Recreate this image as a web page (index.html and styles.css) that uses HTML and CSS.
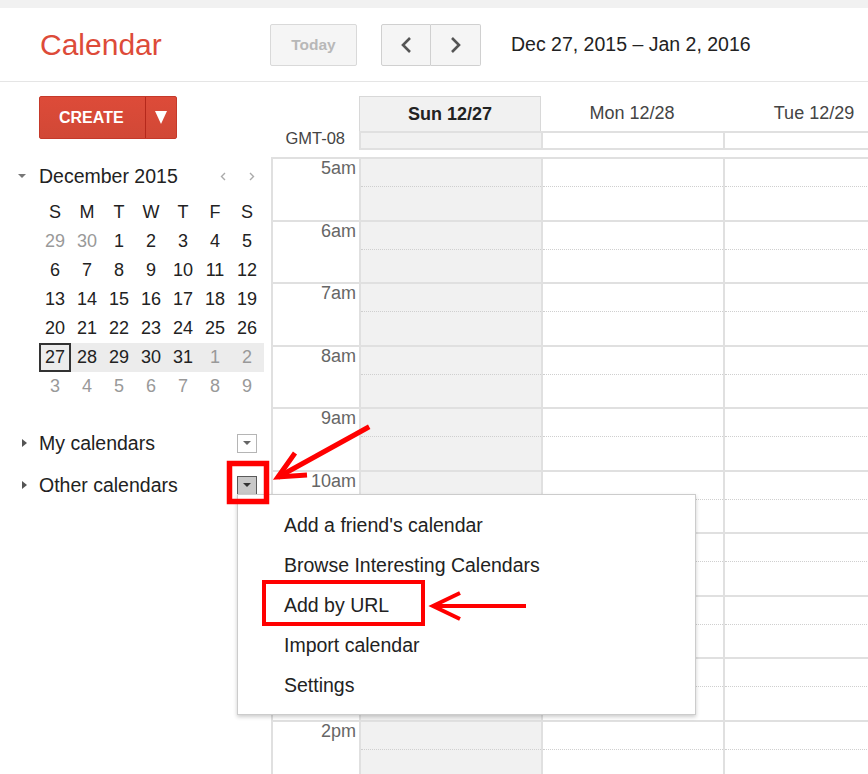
FILE: index.html
```html
<!DOCTYPE html>
<html lang="en">
<head>
  <meta charset="UTF-8">
  <meta name="viewport" content="width=device-width, initial-scale=1.0">
  <title>Calendar</title>
  <link rel="stylesheet" href="styles.css">
</head>
<body>
<div class="app">
  <div class="top-strip"></div>

  <!-- Header -->
  <header class="header">
    <div class="logo">Calendar</div>
    <button class="btn btn-today">Today</button>
    <div class="btn-group">
      <button class="btn btn-nav">
        <svg width="12" height="18" viewBox="0 0 12 18"><polyline points="10,2 3,9 10,16" fill="none" stroke="#555" stroke-width="2.6"/></svg>
      </button>
      <button class="btn btn-nav">
        <svg width="12" height="18" viewBox="0 0 12 18"><polyline points="2,2 9,9 2,16" fill="none" stroke="#555" stroke-width="2.6"/></svg>
      </button>
    </div>
    <div class="date-range">Dec 27, 2015 &ndash; Jan 2, 2016</div>
  </header>

  <div class="main">
    <!-- Sidebar -->
    <aside class="sidebar">
      <div class="create">
        <span class="create-label">CREATE</span>
        <span class="create-arrow">
          <svg width="12" height="13" viewBox="0 0 12 13"><polygon points="0,0 12,0 6,13" fill="#fff"/></svg>
        </span>
      </div>

      <div class="mini-head">
        <span class="toggle toggle-down"></span>
        <span class="mini-title">December 2015</span>
        <span class="mini-nav mini-prev">
          <svg width="6" height="9" viewBox="0 0 6 9"><polyline points="5,1 1.5,4.5 5,8" fill="none" stroke="#aaa" stroke-width="1.4"/></svg>
        </span>
        <span class="mini-nav">
          <svg width="6" height="9" viewBox="0 0 6 9"><polyline points="1,1 4.5,4.5 1,8" fill="none" stroke="#aaa" stroke-width="1.4"/></svg>
        </span>
      </div>

      <div class="mini-grid">
        <div class="mini-row"><span>S</span><span>M</span><span>T</span><span>W</span><span>T</span><span>F</span><span>S</span></div>
        <div class="mini-row"><span class="off">29</span><span class="off">30</span><span>1</span><span>2</span><span>3</span><span>4</span><span>5</span></div>
        <div class="mini-row"><span>6</span><span>7</span><span>8</span><span>9</span><span>10</span><span>11</span><span>12</span></div>
        <div class="mini-row"><span>13</span><span>14</span><span>15</span><span>16</span><span>17</span><span>18</span><span>19</span></div>
        <div class="mini-row"><span>20</span><span>21</span><span>22</span><span>23</span><span>24</span><span>25</span><span>26</span></div>
        <div class="mini-row current"><span class="today">27</span><span>28</span><span>29</span><span>30</span><span>31</span><span class="off">1</span><span class="off">2</span></div>
        <div class="mini-row"><span class="off">3</span><span class="off">4</span><span class="off">5</span><span class="off">6</span><span class="off">7</span><span class="off">8</span><span class="off">9</span></div>
      </div>

      <div class="cal-list">
        <div class="cal-row">
          <span class="toggle toggle-right"></span>
          <span class="cal-name">My calendars</span>
          <span class="dd-btn"></span>
        </div>
        <div class="cal-row">
          <span class="toggle toggle-right"></span>
          <span class="cal-name">Other calendars</span>
          <span class="dd-btn active"></span>
        </div>
      </div>
    </aside>

    <!-- Week view -->
    <section class="week">
      <div class="week-head">
        <div></div>
        <div class="head-day sel">Sun 12/27</div>
        <div class="head-day">Mon 12/28</div>
        <div class="head-day">Tue 12/29</div>
      </div>
      <div class="allday">
        <div class="tz">GMT-08</div>
        <div class="allday-cell sel"></div>
        <div class="allday-cell"></div>
        <div class="allday-cell"></div>
      </div>
      <div class="hours">
        <div class="hour"><div class="time">5am</div><div class="slot sel"></div><div class="slot"></div><div class="slot"></div></div>
        <div class="hour"><div class="time">6am</div><div class="slot sel"></div><div class="slot"></div><div class="slot"></div></div>
        <div class="hour"><div class="time">7am</div><div class="slot sel"></div><div class="slot"></div><div class="slot"></div></div>
        <div class="hour"><div class="time">8am</div><div class="slot sel"></div><div class="slot"></div><div class="slot"></div></div>
        <div class="hour"><div class="time">9am</div><div class="slot sel"></div><div class="slot"></div><div class="slot"></div></div>
        <div class="hour"><div class="time">10am</div><div class="slot sel"></div><div class="slot"></div><div class="slot"></div></div>
        <div class="hour"><div class="time">11am</div><div class="slot sel"></div><div class="slot"></div><div class="slot"></div></div>
        <div class="hour"><div class="time">12pm</div><div class="slot sel"></div><div class="slot"></div><div class="slot"></div></div>
        <div class="hour"><div class="time">1pm</div><div class="slot sel"></div><div class="slot"></div><div class="slot"></div></div>
        <div class="hour"><div class="time">2pm</div><div class="slot sel"></div><div class="slot"></div><div class="slot"></div></div>
      </div>
    </section>

    <!-- Other calendars menu -->
    <div class="menu">
      <div class="menu-item">Add a friend's calendar</div>
      <div class="menu-item">Browse Interesting Calendars</div>
      <div class="menu-item">Add by URL</div>
      <div class="menu-item">Import calendar</div>
      <div class="menu-item">Settings</div>
    </div>
  </div>

  <!-- Annotation marks -->
  <svg class="marks" width="868" height="774" viewBox="0 0 868 774">
    <g fill="none" stroke="#f00" stroke-linecap="square">
      <rect x="229.5" y="463.5" width="37" height="38" stroke-width="5.5"/>
      <rect x="264" y="582" width="159" height="42" stroke-width="4"/>
      <line x1="367" y1="428" x2="280" y2="476" stroke-width="5"/>
      <polyline points="295,453 278,477 307,475" stroke-width="5" stroke-linecap="butt"/>
      <line x1="524" y1="606" x2="436" y2="606" stroke-width="4"/>
      <polyline points="460,593 433,606 460,619" stroke-width="4" stroke-linecap="butt"/>
    </g>
  </svg>
</div>
</body>
</html>
```

FILE: styles.css
```css
/* Global body styles */
body {
  margin: 0;
  font-family: "Liberation Sans", Arial, sans-serif;
  color: #222;
  background: #fff;
  overflow: hidden;
}

.app {
  position: relative;
  width: 868px;
  height: 774px;
  overflow: hidden;
}

.top-strip {
  height: 8px;
  background: #f1f1f1;
}

/* Header */
.header {
  display: flex;
  align-items: center;
  height: 73px;
  padding-left: 40px;
  border-bottom: 1px solid #e5e5e5;
}

.logo {
  width: 230px;
  font-size: 30px;
  color: #dd4b39;
}

.btn {
  font-family: inherit;
  background: #f5f5f5;
  border: 1px solid #d9d9d9;
  border-radius: 2px;
  padding: 0;
  height: 42px;
}

.btn-today {
  width: 87px;
  font-size: 15.5px;
  font-weight: bold;
  color: #b8b8b8;
}

.btn-group {
  display: flex;
  margin-left: 24px;
}

.btn-nav {
  width: 50px;
  display: flex;
  align-items: center;
  justify-content: center;
  border-color: #d0d0d0;
}

.btn-nav:first-child {
  border-radius: 2px 0 0 2px;
}

.btn-nav:last-child {
  border-left: none;
  border-radius: 0 2px 2px 0;
}

.date-range {
  margin-left: 30px;
  font-size: 19.5px;
}

/* Main area */
.main {
  position: relative;
  display: flex;
}

.sidebar {
  width: 271px;
  flex-shrink: 0;
  padding: 14px 0 0 18px;
  box-sizing: border-box;
}

.create {
  display: flex;
  width: 138px;
  height: 43px;
  margin-left: 21px;
  box-sizing: border-box;
  border: 1px solid #c5392a;
  border-radius: 2px;
  background: linear-gradient(#dd4b39, #d14836);
  color: #fff;
}

.create-label {
  width: 106px;
  padding-left: 19px;
  box-sizing: border-box;
  font-size: 16px;
  font-weight: bold;
  line-height: 41px;
  border-right: 1px solid #b5281b;
}

.create-arrow {
  flex: 1;
  display: flex;
  align-items: center;
  justify-content: center;
}

/* Mini month */
.mini-head {
  display: flex;
  align-items: center;
  height: 22px;
  margin-top: 26px;
  padding-right: 5px;
}

.toggle {
  width: 0;
  height: 0;
}

.toggle-down {
  border-left: 4px solid transparent;
  border-right: 4px solid transparent;
  border-top: 4px solid #777;
  margin-right: 13px;
}

.toggle-right {
  border-top: 4px solid transparent;
  border-bottom: 4px solid transparent;
  border-left: 5px solid #555;
  margin-left: 4px;
  margin-right: 12px;
}

.mini-title {
  font-size: 19.5px;
}

.mini-nav {
  width: 29px;
  display: flex;
  justify-content: center;
}

.mini-prev {
  margin-left: auto;
}

.mini-grid {
  margin: 11px 0 0 21px;
}

.mini-row {
  display: grid;
  grid-template-columns: repeat(7, 32px);
  height: 29px;
  line-height: 29px;
  font-size: 18px;
  text-align: center;
}

.mini-row.current {
  background: #ececec;
  width: 225px;
}

.mini-row .off {
  color: #999;
}

.mini-row .today {
  border: 2px solid #333;
  line-height: 25px;
}

/* Calendar list */
.cal-list {
  margin-top: 21px;
  padding-right: 14px;
}

.cal-row {
  display: flex;
  align-items: center;
  height: 42px;
}

.cal-name {
  font-size: 19.5px;
}

.dd-btn {
  margin-left: auto;
  width: 20px;
  height: 19px;
  box-sizing: border-box;
  border: 1px solid #b5b5b5;
  background: #fff;
  display: flex;
  align-items: center;
  justify-content: center;
}

.dd-btn::after {
  content: "";
  border-left: 4px solid transparent;
  border-right: 4px solid transparent;
  border-top: 4px solid #666;
}

.dd-btn.active {
  background: #c8c8c8;
  border-color: #5a5a5a;
}

.dd-btn.active::after {
  border-top-color: #333;
}

/* Week view */
.week {
  flex: 1;
  overflow: hidden;
  padding-top: 14px;
}

.week-head,
.allday,
.hour {
  display: grid;
  grid-template-columns: 88px 182px 182px 182px;
}

.week-head {
  height: 35px;
}

.head-day {
  text-align: center;
  line-height: 35px;
  font-size: 18px;
  color: #444;
}

.head-day.sel {
  background: #f1f1f1;
  border: 1px solid #d8d8d8;
  border-bottom: none;
  font-weight: bold;
  color: #222;
}

.allday {
  height: 19px;
}

.tz {
  font-size: 16.5px;
  color: #444;
  text-align: right;
  padding-right: 14px;
  line-height: 14px;
}

.allday-cell {
  border-top: 2px solid #e0e0e0;
  border-bottom: 2px solid #e0e0e0;
  border-left: 2px solid #e0e0e0;
}

.allday-cell.sel {
  background: #f1f1f1;
}

.hours {
  margin-top: 7px;
}

.hour {
  height: 62.5px;
}

.time,
.slot {
  border-top: 2px solid #e0e0e0;
  border-left: 2px solid #e0e0e0;
}

.time {
  font-size: 18px;
  line-height: 18px;
  color: #666;
  text-align: right;
  padding-right: 3px;
}

.slot::before {
  content: "";
  display: block;
  height: 27px;
  border-bottom: 1px dotted #cfcfcf;
}

.slot.sel {
  background: #f1f1f1;
}

/* Dropdown menu */
.menu {
  position: absolute;
  top: 412px;
  left: 237px;
  width: 459px;
  height: 221px;
  box-sizing: border-box;
  padding: 10px 0 11px;
  background: #fff;
  border: 1px solid #ccc;
  box-shadow: 0 2px 4px rgba(0, 0, 0, 0.2);
}

.menu-item {
  height: 40px;
  line-height: 40px;
  padding-left: 46px;
  font-size: 19.5px;
  color: #222;
}

/* Annotation overlay */
.marks {
  position: absolute;
  top: 0;
  left: 0;
  pointer-events: none;
}
```
